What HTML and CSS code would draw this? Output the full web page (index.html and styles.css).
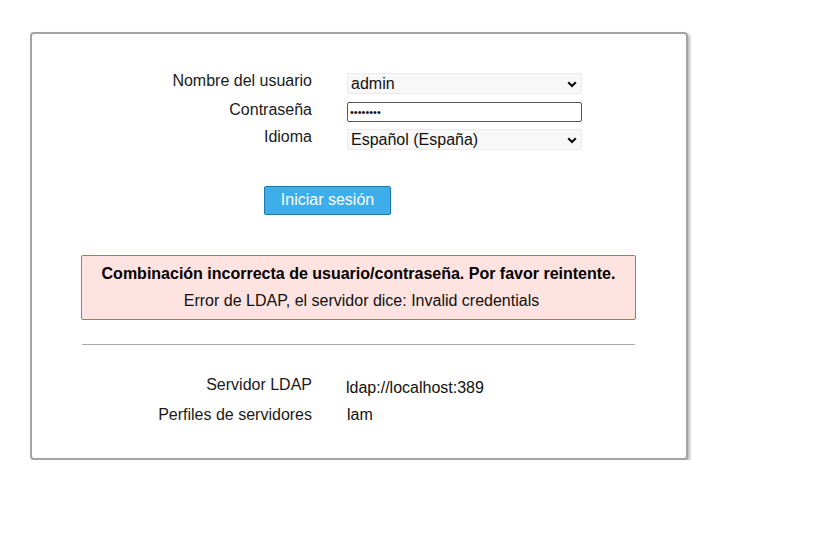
FILE: index.html
```html
<!DOCTYPE html>
<html lang="es">
<head>
<meta charset="utf-8">
<title>LAM</title>
<link rel="stylesheet" href="styles.css">
</head>
<body>
<div class="card">
  <form class="login-grid">
    <label class="lbl" for="user">Nombre del usuario</label>
    <div class="field sel">
      <select id="user" class="select"><option>admin</option></select>
      <svg class="chev" width="10" height="7" viewBox="0 0 10 7"><path d="M1.2 1.3 L5 5 L8.8 1.3" fill="none" stroke="#111" stroke-width="2.2"/></svg>
    </div>
    <label class="lbl" for="pw">Contraseña</label>
    <div class="field">
      <input id="pw" class="pass" type="password" value="********">
    </div>
    <label class="lbl" for="lang">Idioma</label>
    <div class="field sel">
      <select id="lang" class="select"><option>Español (España)</option></select>
      <svg class="chev" width="10" height="7" viewBox="0 0 10 7"><path d="M1.2 1.3 L5 5 L8.8 1.3" fill="none" stroke="#111" stroke-width="2.2"/></svg>
    </div>
  </form>
  <button class="btn" type="button">Iniciar sesión</button>
  <div class="error">
    <div class="err-title">Combinación incorrecta de usuario/contraseña. Por favor reintente.</div>
    <div class="err-text">Error de LDAP, el servidor dice: Invalid credentials</div>
  </div>
  <hr class="sep">
  <div class="info-grid">
    <div class="lbl">Servidor LDAP</div>
    <div class="val val-1">ldap://localhost:389</div>
    <div class="lbl">Perfiles de servidores</div>
    <div class="val val-2">lam</div>
  </div>
</div>
</body>
</html>
```
FILE: styles.css
```css
html, body {
  margin: 0;
  padding: 0;
  background: #fff;
}
body {
  font-family: "Liberation Sans", Arial, sans-serif;
  font-size: 16px;
  color: #1a1a1a;
}
.card {
  margin: 32px 0 0 30px;
  width: 654px;
  border: 2px solid #a3a3a3;
  border-radius: 4px;
  box-shadow: 2px 2px 3px rgba(0, 0, 0, 0.28);
  padding: 37px 0 34px 0;
  background: #fff;
}
.login-grid {
  display: grid;
  grid-template-columns: 280px 235px;
  grid-template-rows: 29px 27px 23px;
  column-gap: 35px;
  margin: 0;
}
.lbl {
  text-align: right;
  line-height: 18px;
  white-space: nowrap;
}
.login-grid .lbl {
  padding-top: 1px;
}
.field {
  margin-top: 2px;
  position: relative;
  height: 21px;
}
.sel .select {
  appearance: none;
  -webkit-appearance: none;
  width: 235px;
  height: 21px;
  margin: 0;
  padding: 0 0 0 3px;
  border: 1px solid #ebebeb;
  border-radius: 2px;
  background: #f8f8f8;
  font-family: "Liberation Sans", Arial, sans-serif;
  font-size: 16px;
  color: #111;
  line-height: 19px;
  outline: none;
}
.chev {
  position: absolute;
  right: 5px;
  top: 8px;
  pointer-events: none;
}
.pass {
  box-sizing: border-box;
  width: 235px;
  height: 20px;
  margin: 0;
  padding: 0 2px;
  border: 1px solid #555;
  border-radius: 2px;
  background: #fff;
  font-family: "Liberation Sans", Arial, sans-serif;
  font-size: 11px;
  color: #111;
  outline: none;
}
.btn {
  display: block;
  margin: 36px 0 0 232px;
  width: 127px;
  height: 29px;
  padding: 0 0 2px;
  border: 1px solid #1d78ad;
  border-radius: 2px;
  background: #3daee9;
  color: #fff;
  font-family: "Liberation Sans", Arial, sans-serif;
  font-size: 16px;
}
.error {
  margin: 40px 50px 0 49px;
  border: 1px solid #ef5a3f;
  border-radius: 2px;
  background: #fee3e0;
  text-align: center;
  padding: 9px 0 9px;
  color: #000;
  line-height: 18px;
}
.err-title {
  font-weight: bold;
}
.err-text {
  margin-top: 9px;
  padding-left: 6px;
  color: #111;
}
.sep {
  margin: 24px 51px 0 50px;
  border: 0;
  border-top: 1px solid #a9a9a9;
  height: 0;
}
.info-grid {
  display: grid;
  grid-template-columns: 280px 240px;
  grid-template-rows: 30px 18px;
  column-gap: 34px;
  margin-top: 31px;
}
.val {
  line-height: 18px;
  color: #111;
}
.val-1 {
  margin-top: 3px;
}
.val-2 {
  margin-top: 0;
  padding-left: 1px;
}
```
